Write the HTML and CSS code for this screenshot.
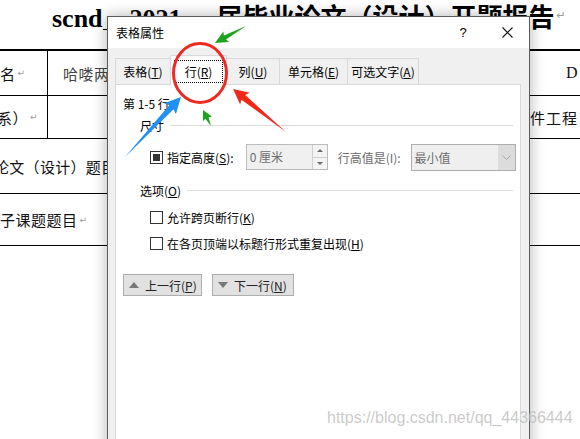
FILE: index.html
```html
<!DOCTYPE html>
<html lang="zh-CN">
<head>
    <meta charset="UTF-8">
    <title>表格属性</title>
    <link rel="stylesheet" href="styles.css">
</head>
<body>
    <!-- Document Word en arrière-plan -->
    <div class="doc">
        <h1 class="doc-title">scnd<span class="blank blank-a"></span>2021<span class="blank blank-b"></span>届毕业论文（设计）开题报告<span class="mark">↵</span></h1>
        <div class="doc-table">
            <div class="doc-row row-1">
                <div class="cell cell-key">名<span class="mark">↵</span></div>
                <div class="cell cell-val val-1">哈喽两个小时</div>
                <div class="cell cell-far far-serif">D</div>
            </div>
            <div class="doc-row row-2">
                <div class="cell cell-key key-shift">系）<span class="mark">↵</span></div>
                <div class="cell cell-val val-2"></div>
                <div class="cell cell-far">件工程：</div>
            </div>
            <div class="doc-row row-3">
                <div class="cell cell-wide wide-shift">论文（设计）题目</div>
            </div>
            <div class="doc-row row-4">
                <div class="cell cell-wide">子课题题目<span class="mark">↵</span></div>
            </div>
        </div>
    </div>

    <!-- Boîte de dialogue -->
    <div class="dialog">
        <div class="dlg-titlebar">
            <span class="dlg-title">表格属性</span>
            <span class="dlg-help">?</span>
            <span class="dlg-close">
                <svg width="11" height="11" viewBox="0 0 11 11"><path d="M0.5 0.5 L10.5 10.5 M10.5 0.5 L0.5 10.5" stroke="#111" stroke-width="1.1" fill="none"/></svg>
            </span>
        </div>
        <div class="dlg-body">
            <div class="tabs">
                <div class="tab tab-1">表格(<u>T</u>)</div>
                <div class="tab tab-2 active"><span class="focus">行(<u>R</u>)</span></div>
                <div class="tab tab-3">列(<u>U</u>)</div>
                <div class="tab tab-4">单元格(<u>E</u>)</div>
                <div class="tab tab-5">可选文字(<u>A</u>)</div>
            </div>
            <div class="panel">
                <div class="range-label">第 1-5 行:</div>

                <div class="group-head">
                    <span>尺寸</span>
                    <span class="group-line"></span>
                </div>
                <div class="size-row">
                    <span class="checkbox filled"></span>
                    <span class="lbl">指定高度(<u>S</u>):</span>
                    <span class="spin">
                        <span class="spin-text">0 厘米</span>
                        <span class="spin-btns">
                            <span class="spin-half"><span class="tri-up small"></span></span>
                            <span class="spin-half"><span class="tri-down small"></span></span>
                        </span>
                    </span>
                    <span class="lbl lbl-disabled">行高值是(I):</span>
                    <span class="select">
                        <span class="select-text">最小值</span>
                        <span class="select-btn">
                            <svg width="9" height="5" viewBox="0 0 9 5"><path d="M0.5 0.5 L4.5 4.5 L8.5 0.5" stroke="#a8a8a8" fill="none"/></svg>
                        </span>
                    </span>
                </div>

                <div class="group-head opt-head">
                    <span>选项(<u>O</u>)</span>
                    <span class="group-line"></span>
                </div>
                <div class="check-row first">
                    <span class="checkbox"></span>
                    <span class="lbl">允许跨页断行(<u>K</u>)</span>
                </div>
                <div class="check-row">
                    <span class="checkbox"></span>
                    <span class="lbl">在各页顶端以标题行形式重复出现(<u>H</u>)</span>
                </div>

                <div class="nav-buttons">
                    <button class="nav-btn btn-prev"><span class="tri-up"></span>上一行(<u>P</u>)</button>
                    <button class="nav-btn btn-next"><span class="tri-down"></span>下一行(<u>N</u>)</button>
                </div>
            </div>
        </div>
    </div>

    <!-- Annotations de la capture -->
    <svg class="annot" width="580" height="439" viewBox="0 0 580 439">
        <ellipse cx="200" cy="73" rx="26.5" ry="29.5" fill="none" stroke="#ee2a22" stroke-width="3"/>
        <polygon transform="translate(246 26) rotate(151.3)" points="0,0 24,-2.2 22.5,-6 35.4,0 22.5,6 24,2.2" fill="#1fa31f"/>
        <polygon transform="translate(286 132) rotate(-140.9)" points="0,0 55,-3 53,-7.5 68.2,0 53,7.5 55,3" fill="#f02818"/>
        <polygon transform="translate(125 157) rotate(-47)" points="0,0 68,-3 66,-8 82,0 66,8 68,3" fill="#2191f5"/>
        <polygon transform="translate(211 126) rotate(-116.6)" points="0,0 9,-1.8 8,-5 17.9,0 8,5 9,1.8" fill="#1fa31f"/>
    </svg>

    <div class="watermark">https://blog.csdn.net/qq_44366444</div>
</body>
</html>
```

FILE: styles.css
```css
* {
    box-sizing: border-box;
}

body {
    margin: 0;
    width: 580px;
    height: 439px;
    overflow: hidden;
    position: relative;
    background: white;
    font-family: "Noto Sans CJK SC", sans-serif;
}

/* Document */
.doc-title {
    margin: 0;
    height: 49px;
    padding: 1px 0 0 52px;
    font-family: "Liberation Serif", "Noto Sans CJK SC", serif;
    font-size: 26px;
    font-weight: bold;
    line-height: 30px;
    white-space: nowrap;
}

.blank {
    display: inline-block;
    height: 2px;
    border-bottom: 1px solid #000;
    vertical-align: -3px;
}

.blank-a { width: 27px; }
.blank-b { width: 35px; }

.mark {
    font-family: "DejaVu Sans", sans-serif;
    font-size: 9px;
    font-weight: normal;
    color: #999;
    margin-left: 2px;
}

.doc-title .mark { font-size: 11px; vertical-align: 8px; }

.doc-table {
    border-top: 2px solid #000;
    font-size: 15px;
    color: #111;
}

.doc-row {
    display: flex;
    border-bottom: 1px solid #000;
}

.row-1 { height: 45px; }
.row-2 { height: 43px; }
.row-3 { height: 55px; }
.row-4 { height: 52px; }

.cell {
    display: flex;
    align-items: center;
    white-space: nowrap;
    letter-spacing: 0.5px;
}

.cell-key {
    width: 48px;
    flex: none;
    border-right: 1px solid #000;
}

.key-shift { margin-left: -3px; width: 51px; }

.cell-val {
    flex: none;
    padding-left: 15px;
    color: #444;
}

.val-1 { width: 515px; }
.val-2 { width: 482px; }

.cell-far { flex: none; letter-spacing: 1px; }
.far-serif { font-family: "Liberation Serif", serif; font-size: 16px; padding-left: 3px; }

.cell-wide { flex: none; }
.wide-shift { margin-left: -6px; letter-spacing: 0.3px; }

/* Dialogue */
.dialog {
    position: absolute;
    left: 107px;
    top: 16px;
    width: 423px;
    height: 440px;
    border: 1px solid #5c5c5c;
    background: #f0f0f0;
    box-shadow: 0 0 14px rgba(0,0,0,0.3);
    font-size: 12px;
    color: #000;
}

.dlg-titlebar {
    height: 31px;
    background: white;
    display: flex;
    align-items: center;
    padding-left: 8px;
}

.dlg-help {
    margin-left: auto;
    width: 20px;
    text-align: center;
    font-family: "Liberation Sans", sans-serif;
    font-size: 13px;
}

.dlg-close {
    width: 44px;
    margin-left: 12px;
    display: flex;
    justify-content: center;
}

.dlg-body {
    padding: 7px 7px 0 7px;
}

.tabs {
    display: flex;
    align-items: flex-end;
    height: 29px;
}

.tab {
    height: 26px;
    border: 1px solid #d9d9d9;
    border-bottom: none;
    background: #f0f0f0;
    display: flex;
    align-items: center;
    justify-content: center;
    white-space: nowrap;
}

.tab + .tab { margin-left: -1px; }

.tab-1 { width: 56px; }
.tab-2 { width: 57px; }
.tab-3 { width: 54px; }
.tab-4 { width: 69px; }
.tab-5 { width: 72px; }

.tab.active {
    height: 30px;
    margin-bottom: -1px;
    background: white;
    position: relative;
    padding: 4px 3px 2px 3px;
    align-items: stretch;
}

.focus {
    flex: 1;
    border: 1px dotted #000;
    display: flex;
    align-items: center;
    justify-content: center;
}

.panel {
    width: 406px;
    height: 360px;
    background: white;
    border: 1px solid #d9d9d9;
    padding: 11px 7px 0 7px;
}

.range-label {
    line-height: 16px;
}

.group-head {
    display: flex;
    align-items: center;
    height: 16px;
    margin-top: 5px;
    padding-left: 17px;
    white-space: nowrap;
}

.group-line {
    flex: 1;
    margin-left: 6px;
    border-top: 1px solid #dcdcdc;
}

.opt-head { margin-top: 12px; }

.lbl {
    white-space: nowrap;
    flex: none;
}

.size-row {
    display: flex;
    align-items: center;
    height: 26px;
    margin-top: 11px;
    padding-left: 27px;
}

.checkbox {
    width: 13px;
    height: 13px;
    border: 1px solid #333;
    background: white;
    flex: none;
    margin-right: 4px;
    position: relative;
}

.checkbox.filled::after {
    content: "";
    position: absolute;
    left: 2px;
    top: 2px;
    width: 7px;
    height: 7px;
    background: #333;
}

.lbl-disabled { color: #6d6d6d; margin-left: 10px; }

.spin {
    margin-left: 12px;
    width: 82px;
    height: 26px;
    flex: none;
    border: 1px solid #bcbcbc;
    background: #f0f0f0;
    display: flex;
}

.spin-text {
    flex: 1;
    padding-left: 3px;
    color: #6d6d6d;
    line-height: 24px;
    white-space: nowrap;
}

.spin-btns {
    width: 15px;
    border-left: 1px solid #d0d0d0;
    display: flex;
    flex-direction: column;
}

.spin-half {
    flex: 1;
    display: flex;
    align-items: center;
    justify-content: center;
    background: #f4f4f4;
}

.spin-half + .spin-half { border-top: 1px solid #d0d0d0; }

.select {
    margin-left: 10px;
    width: 105px;
    height: 27px;
    flex: none;
    border: 1px solid #adadad;
    background: #efefef;
    display: flex;
}

.select-text {
    flex: 1;
    padding-left: 3px;
    color: #6d6d6d;
    line-height: 25px;
    white-space: nowrap;
}

.select-btn {
    width: 17px;
    background: #dcdcdc;
    display: flex;
    align-items: center;
    justify-content: center;
}

.check-row {
    display: flex;
    align-items: center;
    height: 16px;
    margin-top: 10px;
    padding-left: 27px;
}

.check-row.first { margin-top: 11px; }

.nav-buttons {
    display: flex;
    gap: 10px;
    margin-top: 23px;
}

.nav-btn {
    height: 22px;
    border: 1px solid #adadad;
    background: #e1e1e1;
    font-family: "Noto Sans CJK SC", sans-serif;
    font-size: 12px;
    color: #222;
    padding: 0 0 0 5px;
    display: flex;
    align-items: center;
    white-space: nowrap;
}

.btn-prev { width: 79px; }
.btn-next { width: 82px; }

.tri-up,
.tri-down {
    width: 0;
    height: 0;
    border-left: 5px solid transparent;
    border-right: 5px solid transparent;
    margin-right: 6px;
}

.tri-up { border-bottom: 6px solid #777; }
.tri-down { border-top: 6px solid #777; }

.tri-up.small,
.tri-down.small {
    border-left-width: 3px;
    border-right-width: 3px;
    margin-right: 0;
}

.tri-up.small { border-bottom-width: 3px; border-bottom-color: #6a6a6a; }
.tri-down.small { border-top-width: 3px; border-top-color: #6a6a6a; }

/* Annotations */
.annot {
    position: absolute;
    left: 0;
    top: 0;
    pointer-events: none;
}

.watermark {
    position: absolute;
    left: 327px;
    top: 409px;
    font-family: "Liberation Sans", sans-serif;
    font-size: 16px;
    line-height: 18px;
    color: rgba(185,185,185,0.75);
    white-space: nowrap;
}
```
